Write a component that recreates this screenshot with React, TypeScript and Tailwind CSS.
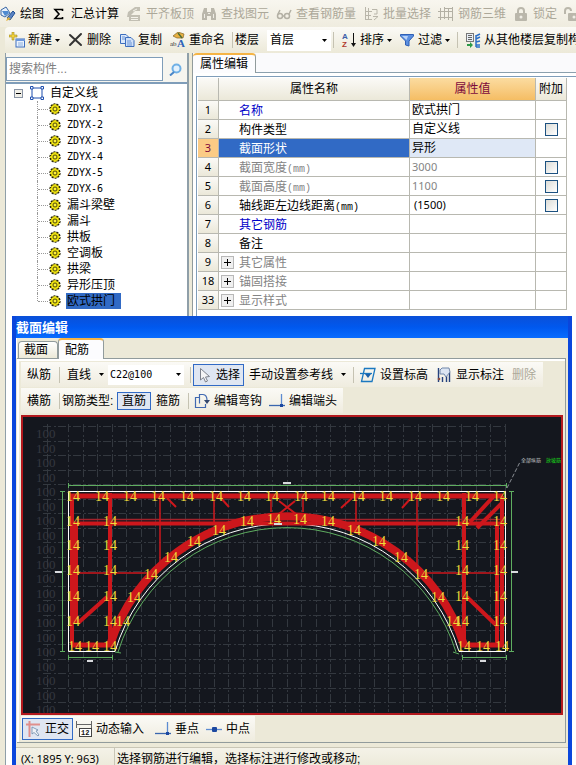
import React from 'react';

type Kids = { children?: React.ReactNode };

function Ico({ children }: Kids) {
  return (
    <svg className="h-4 w-4 shrink-0" viewBox="0 0 16 16" fill="none" aria-hidden="true">
      {children}
    </svg>
  );
}

const Bucket = () => (
  <Ico>
    <path d="M1 4 L6 1 L10 7 L5 11 L1 9Z" fill="#e8f1fb" stroke="#3a67a5" />
    <path d="M2 5 L8 5 L9 7 L5 10Z" fill="#4e8ad0" />
    <path d="M7 12 L13 5 L15 7 L10 14Z" fill="#5b84c4" stroke="#1f4f93" />
    <path d="M6 15 L8 11 L11 13Z" fill="#e2b23c" />
  </Ico>
);
const Sigma = () => (
  <Ico>
    <path d="M11.500 5 V3.500 H4 L8 8 L4 12.500 H11.500 V11" stroke="#000" strokeWidth="1.600" />
  </Ico>
);
const AlignTop = () => (
  <Ico>
    <path d="M2 6 L9 1 H14 V5 H9 L5 9 H14 V15 H3 V11 H1Z" fill="#c2bfb3" />
    <path d="M5 11.500 H12 M5 13.500 H12 M7 5 L11 3" stroke="#f4f2ea" />
  </Ico>
);
const Binoculars = () => (
  <Ico>
    <path d="M3 2 H6 V6 H10 V2 H13 L15 8 V14 H10 V10 H6 V14 H1 V8Z" fill="#bab7ab" />
    <path d="M3.500 8 V12 M12.500 8 V12 M7 7.500 H9" stroke="#f0eee6" />
  </Ico>
);
const Glasses = () => (
  <Ico>
    <circle cx="4" cy="10" r="2.500" stroke="#b3b0a4" strokeWidth="1.500" />
    <circle cx="11" cy="10" r="2.500" stroke="#b3b0a4" strokeWidth="1.500" />
    <path d="M2 8 L4 4 M13 8 L15 4 M6 10 H9" stroke="#b3b0a4" strokeWidth="1.500" />
  </Ico>
);
const Batch = () => (
  <Ico>
    <path d="M2.500 1 V14 M5.500 2 V14 M2 5.500 H9 M2 9.500 H8 M2 13.500 H9 M9 3.500 H14 V8 H11 M10 10.500 H15 L11 14" stroke="#b9b6aa" />
  </Ico>
);
const Rebar3d = () => (
  <Ico>
    <path d="M2.500 2 V14 M6.500 1 V13 M10.500 2 V14 M14.500 1 V15 M0 5.500 H15 M0 11.500 H15 M6 2.500 H14" stroke="#b3b0a4" />
  </Ico>
);
const Lock = () => (
  <Ico>
    <path d="M5 8 V5 a3 3 0 0 1 6 0 V8" stroke="#bab7ab" strokeWidth="2" />
    <rect x="2" y="7" width="12" height="8" rx="1" fill="#bab7ab" />
    <circle cx="8" cy="11" r="1.500" fill="#f0eee6" />
  </Ico>
);
const Unlock = () => (
  <Ico>
    <path d="M1 8 V5 a3 3 0 0 1 6 0" stroke="#bab7ab" strokeWidth="2" />
    <rect x="4" y="7" width="12" height="8" rx="1" fill="#bab7ab" />
    <circle cx="10" cy="11" r="1.500" fill="#f0eee6" />
  </Ico>
);
const NewItem = () => (
  <Ico>
    <path d="M3 0 H5 V3 H8 V5 H5 V8 H3 V5 H0 V3 H3Z" fill="#f1d13c" stroke="#9f8b22" strokeWidth=".6" />
    <rect x="7" y="7" width="8.500" height="8" fill="#eaf2fd" stroke="#3d6ebf" />
    <path d="M7 8 H16" stroke="#6c97dc" strokeWidth="2" />
    <path d="M9 11 H14 M9 13 H14" stroke="#8aaede" />
  </Ico>
);
const Cross = () => (
  <Ico>
    <path d="M2 3 L13 13 M13 2 L2 13" stroke="#333" strokeWidth="2" strokeLinecap="round" />
  </Ico>
);
const Copy = () => (
  <Ico>
    <path d="M1.500 2.500 H7 L9.500 5 V11.500 H1.500Z" fill="#dbe8fa" stroke="#3d6ebf" />
    <path d="M6.500 5.500 H12 L15 8.500 V14.500 H6.500Z" fill="#cfe0f8" stroke="#3d6ebf" />
    <path d="M8 9 H12 M8 11 H13 M8 13 H13 M3 5 H6 M3 7 H6" stroke="#6a93d4" />
  </Ico>
);
const Rename = () => (
  <Ico>
    <path d="M3 4 L8 0 L14 2 L13 6 L7 6Z" fill="#e9b243" stroke="#806326" strokeWidth=".7" />
    <path d="M8 1 L12 6" stroke="#4c6b35" strokeWidth="1.500" />
    <text x="0" y="14" fontSize="7" fontFamily="Liberation Serif, serif" fill="#333">ab</text>
    <text x="7" y="15" fontSize="11" fontWeight="bold" fontFamily="Liberation Serif, serif" fill="#2c62b8">A</text>
  </Ico>
);
const SortAz = () => (
  <Ico>
    <text x="1" y="7" fontSize="8" fontWeight="bold" fontFamily="Liberation Sans, sans-serif" fill="#3d5fa8">A</text>
    <text x="1" y="15" fontSize="8" fontWeight="bold" fontFamily="Liberation Sans, sans-serif" fill="#b0382c">Z</text>
    <path d="M12.500 1 V12" stroke="#111" />
    <path d="M10 11 H15 L12.500 15Z" fill="#111" />
  </Ico>
);
const Funnel = () => (
  <Ico>
    <path d="M1.500 2.500 H14.500 V4 L10 9 V14 L6.500 13 V9 L1.500 4Z" fill="#5b8fe0" stroke="#2f5fb5" />
    <path d="M3 4 H9 L7.500 8Z" fill="#b9d3f7" />
  </Ico>
);
const CopyFloor = () => (
  <Ico>
    <rect x="1.500" y="1.500" width="7" height="8" fill="#e8eef5" stroke="#777" />
    <path d="M3 3.500 H7 M3 5.500 H7 M3 7.500 H7" stroke="#666" />
    <path d="M2 12 H5 V10 L8 13 L5 16 V14 H2Z" fill="#2d9a48" />
    <path d="M11 3 V15 M11 4 L15 2 M11 7 L15 5 M11 10 L15 9 M11 13 L15 13 M11 15 H15" stroke="#2c70c9" strokeWidth="1.500" />
  </Ico>
);
const Pointer = () => (
  <Ico>
    <path d="M3.500 1.500 V13 L6.500 10.500 L8.500 15 L10.500 14 L8.500 10 L12.500 9.500Z" fill="#f4f4f6" stroke="#7c818c" />
  </Ico>
);
const Level = () => (
  <Ico>
    <path d="M4.500 1.500 H15 L12 14.500 H1.500Z" stroke="#1b78c0" strokeWidth="1.300" />
    <path d="M0 6.500 H12" stroke="#1b78c0" strokeWidth="1.300" />
    <path d="M5 7 H11 L8 11Z" fill="#1b5fa8" />
  </Ico>
);
const Dimension = () => (
  <Ico>
    <path d="M2.500 1 V15 M13.500 5 V15 M6.500 10 V15 M10.500 9 V15" stroke="#26427e" strokeWidth="1.400" />
    <path d="M4 3 L6 1 H13 L14 5 L10 10 L8 7 H4Z" fill="#dce5f2" stroke="#7187aa" />
    <circle cx="3" cy="12" r="1.300" fill="#8a4c42" />
  </Ico>
);
const Hook = () => (
  <Ico>
    <path d="M5.500 4.500 H1.500 V14.500 H11.500 V11 M5.500 10.500 V1.500 H9 Q13 2 13 7" stroke="#4169b1" strokeWidth="1.200" />
    <path d="M10 7 H16 L13 11Z" fill="#33476d" />
  </Ico>
);
const Perp = () => (
  <Ico>
    <path d="M0 12.500 H16" stroke="#3a66ae" strokeWidth="1.300" />
    <path d="M12.500 1 V12" stroke="#5c8bd1" strokeWidth="1.300" />
    <rect x="11" y="11" width="3" height="3" fill="#1c48a0" />
  </Ico>
);
const Midpoint = () => (
  <Ico>
    <path d="M0 8.500 H16" stroke="#5c8bd1" strokeWidth="1.300" />
    <rect x="6" y="6" width="5" height="5" rx="1" fill="#1c48a0" />
  </Ico>
);
const Ortho = () => (
  <Ico>
    <path d="M1 3.500 H15 M4.500 0 V16" stroke="#e08f8c" strokeWidth="2" />
    <path d="M7 6 V13 L9 11.500 L13 15 L14 14 L11 10 L13 9Z" fill="#eef2f7" stroke="#6b89a8" strokeWidth=".8" />
  </Ico>
);
const DynInput = () => (
  <Ico>
    <path d="M.5 0 V7 M15.500 0 V7 M1 3.500 H15" stroke="#666" />
    <rect x="3.500" y="7.500" width="12" height="8" fill="#fff" stroke="#444" />
    <text x="5" y="14" fontSize="7" fontFamily="Liberation Mono, monospace" fontWeight="bold" fill="#111">12</text>
  </Ico>
);
const Polygon = () => (
  <Ico>
    <path d="M3 3 H13 V13 H3Z" stroke="#1f4fae" fill="#fff" />
    <path d="M1.500 1.500 H4 V4 H1.500Z M12 1.500 H14.500 V4 H12Z M1.500 12 H4 V14.500 H1.500Z M12 12 H14.500 V14.500 H12Z" fill="#fff" stroke="#1f4fae" />
  </Ico>
);
const Gear = () => (
  <svg className="h-3 w-3 shrink-0" viewBox="0 0 12 12" aria-hidden="true">
    <circle cx="6" cy="6" r="4.900" fill="#d8c800" stroke="#26240a" strokeWidth="1.500" strokeDasharray="2 1" />
    <path d="M6 1 V11 M1 6 H11 M3 3 L9 9 M9 3 L3 9" stroke="#f8ee1c" strokeWidth="1.300" />
    <circle cx="6" cy="6" r="2" fill="#fff23a" stroke="#3a3608" strokeWidth=".9" />
  </svg>
);
const Caret = () => (
  <svg className="h-[3px] w-[5px] shrink-0" viewBox="0 0 5 3" aria-hidden="true">
    <path d="M0 0 H5 L2.500 3Z" fill="#000" />
  </svg>
);
const Sep = () => <span className="h-4 w-px shrink-0 bg-[#c5c2b2]" />;

type ToolProps = { icon?: React.ReactNode; label: string; off?: boolean; caret?: boolean; tight?: boolean };

function Tool({ icon, label, off, caret, tight }: ToolProps) {
  return (
    <button
      type="button"
      disabled={off}
      className={
        off ? 'flex shrink-0 items-center gap-1 text-[#aca899]' : tight ? 'flex shrink-0 items-center gap-[3px]' : 'flex shrink-0 items-center gap-1'
      }
    >
      {icon}
      <span>{label}</span>
      {caret && <Caret />}
    </button>
  );
}

function Combo({ label, options, className }: { label: string; options: string[]; className: string }) {
  return (
    <label className={className}>
      <select aria-label={label} className="min-w-0 flex-1 appearance-none bg-transparent outline-none">
        {options.map((o) => (
          <option key={o}>{o}</option>
        ))}
      </select>
      <Caret />
    </label>
  );
}

const components = ['ZDYX-1', 'ZDYX-2', 'ZDYX-3', 'ZDYX-4', 'ZDYX-5', 'ZDYX-6', '漏斗梁壁', '漏斗', '拱板', '空调板', '拱梁', '异形压顶', '欧式拱门'];

function ComponentTree() {
  return (
    <div className="flex-1 border-t-2 border-[#7f9db9] bg-white pt-px leading-4">
      <div className="flex items-center pl-2">
        <button type="button" aria-label="收起" className="flex h-[9px] w-[9px] items-center justify-center border border-[#8a94a4] bg-[#f0efe8]">
          <span className="h-px w-[5px] bg-black" />
        </button>
        <span className="ml-[6px] flex">
          <Polygon />
        </span>
        <span className="ml-[5px]">自定义线</span>
      </div>
      <ul className="ml-[31px]">
        {components.map((c, i) => (
          <li key={c} className="flex h-4 items-center">
            <span className={i === 12 ? 'h-2 self-start border-l border-dotted border-[#999]' : 'h-4 border-l border-dotted border-[#999]'} />
            <span className="mr-px w-[10px] border-t border-dotted border-[#999]" />
            <Gear />
            <span
              className={
                i === 12
                  ? 'ml-[5px] h-4 w-[55px] bg-[#316ac5] pl-px'
                  : i < 6
                    ? 'ml-[6px] font-[DejaVu_Sans_Mono,monospace] text-[10px]'
                    : 'ml-[6px]'
              }
            >
              {c}
            </span>
          </li>
        ))}
      </ul>
    </div>
  );
}

type Row = { n: number; name: string; value?: string; check?: boolean; tone?: string; group?: boolean };
const rows: Row[] = [
  { n: 1, name: '名称', value: '欧式拱门', tone: 'text-[#0000c8]' },
  { n: 2, name: '构件类型', value: '自定义线', check: true },
  { n: 3, name: '截面形状', value: '异形' },
  { n: 4, name: '截面宽度(mm)', value: '3000', check: true, tone: 'text-[#848484]' },
  { n: 5, name: '截面高度(mm)', value: '1100', check: true, tone: 'text-[#848484]' },
  { n: 6, name: '轴线距左边线距离(mm)', value: '(1500)', check: true },
  { n: 7, name: '其它钢筋', tone: 'text-[#0000c8]' },
  { n: 8, name: '备注' },
  { n: 9, name: '其它属性', tone: 'text-[#848484]', group: true },
  { n: 18, name: '锚固搭接', tone: 'text-[#848484]', group: true },
  { n: 33, name: '显示样式', tone: 'text-[#848484]', group: true },
];

function NameText({ text }: { text: string }) {
  const unit = text.endsWith('(mm)');
  return (
    <>
      {unit ? text.slice(0, -4) : text}
      {unit && <span className="font-[Liberation_Mono,monospace] text-[10px] leading-none">(mm)</span>}
    </>
  );
}

function PropertyTable() {
  return (
    <table className="w-[369px] table-fixed border-separate border-spacing-0 leading-4">
      <colgroup>
        <col className="w-[21px]" />
        <col className="w-[191px]" />
        <col className="w-[126px]" />
        <col className="w-[31px]" />
      </colgroup>
      <thead>
        <tr className="h-[23px]">
          {['', '属性名称', '属性值', '附加'].map((h, i) => (
            <th
              key={i}
              className={
                i === 2
                  ? 'border-r border-b border-[#b8b8b0] bg-linear-to-b from-[#fbdca0] to-[#f5bd63] p-0 font-normal text-[#7c0a3c]'
                  : 'border-r border-b border-[#b8b8b0] bg-linear-to-b from-[#fbfaf7] to-[#ebe8d9] p-0 font-normal whitespace-nowrap'
              }
            >
              {h}
            </th>
          ))}
        </tr>
      </thead>
      <tbody>
        {rows.map((r) => {
          const sel = r.n === 3;
          return (
            <tr key={r.n} className="h-[19px]">
              <th
                scope="row"
                className={
                  sel
                    ? 'border-r border-b border-[#b8b8b0] bg-[#fbcb85] p-0 font-[Noto_Sans,sans-serif] text-[11px] font-normal text-[#7c0a3c]'
                    : 'border-r border-b border-[#b8b8b0] bg-linear-to-b from-[#fbfaf7] to-[#ebe8d9] p-0 font-[Noto_Sans,sans-serif] text-[11px] font-normal'
                }
              >
                {r.n}
              </th>
              <td className={sel ? 'border-r border-b border-[#b8b8b0] bg-[#316ac5] p-0 text-white' : 'border-r border-b border-[#b8b8b0] p-0'}>
                <div className="flex items-center pt-px">
                  <span className="flex w-5 pl-[2px]">
                    {r.group && (
                      <button type="button" aria-label="展开" className="flex h-[13px] w-[13px] items-center justify-center border border-[#b8b8b8] bg-[#f0f0f0]">
                        <svg className="h-[7px] w-[7px]" viewBox="0 0 7 7">
                          <path d="M0 3.500 H7 M3.500 0 V7" stroke="#000" />
                        </svg>
                      </button>
                    )}
                  </span>
                  <span className={r.tone}>
                    <NameText text={r.name} />
                  </span>
                </div>
              </td>
              <td className={sel ? 'border-r border-b border-[#b8b8b0] bg-[#dfe8f6] p-0 pl-[2px]' : 'border-r border-b border-[#b8b8b0] p-0 pl-[2px]'}>
                <span className={r.n === 4 || r.n === 5 ? 'font-[Noto_Sans,sans-serif] text-[11px] text-[#848484]' : r.n === 6 ? 'pl-[2px] font-[Noto_Sans,sans-serif] text-[11px]' : ''}>{r.value}</span>
              </td>
              <td className="border-r border-b border-[#b8b8b0] p-0">
                {r.check && (
                  <input
                    type="checkbox"
                    aria-label={r.name}
                    className="mx-auto block h-[13px] w-[13px] appearance-none border border-[#1c5180] bg-linear-to-br from-[#dcdcd7] to-white"
                  />
                )}
              </td>
            </tr>
          );
        })}
      </tbody>
    </table>
  );
}

const step = 437 / 30;
const bars: [number, number][] = [
  ...[73, 102, 130, 158, 187, 216, 244, 272, 301, 328, 358, 386, 415, 443, 472, 500].map((x): [number, number] => [x, 497]),
  ...[522, 546, 571, 597, 622].flatMap((y) => [73, 110, 462, 500].map((x): [number, number] => [x, y])),
  [75, 647], [92, 647], [110, 647], [464, 647], [483, 647], [502, 647],
  [123, 622], [134, 598], [151, 575], [171, 558], [194, 542], [219, 531], [247, 522], [274, 520],
  [300, 520], [328, 522], [354, 531], [379, 542], [401, 558], [421, 575], [438, 598], [453, 622],
];

function SectionDrawing() {
  return (
    <svg className="block w-full" viewBox="23 417 538 296" role="img" aria-label="截面配筋图" fill="none">
      <g stroke="#33383f" strokeDasharray="8 3 2 2">
        {Array.from({ length: 31 }, (_, i) => (
          <path key={i} d={`M${Math.round(68 + i * step) + 0.5} 424 V712`} />
        ))}
        {Array.from({ length: 20 }, (_, i) => (
          <path key={i} d={`M43 ${Math.round(426 + i * 14.54) + 0.5} H508`} />
        ))}
        <path d="M47.500 424 V712" />
      </g>
      <g fill="#343840" fontFamily="Liberation Serif, serif" fontSize="13">
        {Array.from({ length: 20 }, (_, i) => (
          <text key={i} x="36" y={438 + i * 14.54}>
            100
          </text>
        ))}
      </g>
      <g stroke="#5fae60">
        <path d="M68 485.500 H507 M62.500 492 V652 M511.500 492 V652 M68 657.500 H113 M462 657.500 H507" />
        <path d="M68.500 483 V488 M506.500 483 V488 M60 491.500 H65 M60 651.500 H65 M509 491.500 H514 M509 651.500 H514 M68.500 655 V660 M112.500 655 V660 M462.500 655 V660 M506.500 655 V660" />
        <path d="M118 652 A177 177 0 0 1 456 652 M115 652 L121 653 M453 652 L459 654" />
      </g>
      <path d="M68.500 491.500 H505.500 V651.500 H459 A179.600 179.600 0 0 0 115 651.500 H68.500Z" stroke="#fff" />
      <g stroke="#cd171c">
        <path d="M70 496 H503 M71 645 H113 M461 645 H504" strokeWidth="5" />
        <path d="M72 523.500 H502 M110 493 V645 M464 493 V645" strokeWidth="4" />
        <path d="M72 496 V645 M502 496 V645" strokeWidth="4" />
        <path d="M74 523 V623" strokeWidth="8" />
        <path d="M497 523 V645" strokeWidth="4" />
        <path d="M76 519.500 H500" strokeWidth="1.500" stroke="#a3222b" />
        <path d="M110 645 A186 186 0 0 1 464 645" strokeWidth="8" />
        <path d="M160 497 V562 M214 497 V524 M271 497 V512 M303 497 V512 M356 497 V524 M417 497 V573 M77 573 H150 M424 573 H496" strokeWidth="1.500" />
        <path d="M167 498 L176 507 M220 497 L229 507 M352 498 L341 508 M411 498 L402 508 M279 501 L296 514 M295 501 L279 514" strokeWidth="2" />
        <path d="M78 623 L107 597 M467 597 L496 625 M493 497 L470 522 M502 503 L477 528" strokeWidth="4" />
      </g>
      <g fill="#efdc3a" fontFamily="Liberation Serif, serif" fontSize="14" textAnchor="middle">
        {bars.map(([x, y], i) => (
          <text key={i} x={x} y={y + 4}>
            14
          </text>
        ))}
      </g>
      <path d="M283 483 H291 M55 572 H62 M511 572 H518 M87 661 H93 M480 661 H486 M274 524 H282" stroke="#d8dadd" strokeWidth="2" />
      <path d="M507 488 L520 462" stroke="#8a8e94" strokeDasharray="4 2" />
      <text x="521" y="462" fontSize="5" fill="#c4c6ca">全部纵筋</text>
      <text x="546" y="462" fontSize="5" fill="#18e018">放坡筋</text>
    </svg>
  );
}

function SectionDialog() {
  return (
    <section
      aria-label="截面编辑"
      className="absolute top-[316px] right-1 bottom-0 left-3 flex flex-col overflow-hidden border-x-4 border-[#0a46dc] bg-[#ece9d8]"
    >
      <h2 className="-mx-1 h-[22px] shrink-0 bg-linear-to-b from-[#0a50d8] via-[#0058ee] to-[#0a6cff] pt-[2px] pl-1 text-[13px] leading-5 font-bold text-white">截面编辑</h2>
      <div role="tablist" className="flex h-5 shrink-0 items-end border-l border-white pl-[1px]">
        <button type="button" role="tab" aria-selected="false" className="h-[17px] w-10 rounded-t-sm border border-b-0 border-[#919b9c] bg-linear-to-b from-white to-[#ece9d8] pr-1 leading-4">
          截面
        </button>
        <button type="button" role="tab" aria-selected="true" className="relative -mb-px h-[21px] w-[46px] rounded-t-sm border border-t-2 border-b-0 border-[#919b9c] border-t-[#f5b445] bg-[#fcfcfe] pr-2 leading-4">
          配筋
        </button>
      </div>
      <div className="mr-[2px] ml-px flex flex-col border-t border-r border-b border-[#919b9c]">
        <div className="flex flex-col gap-px border-t-2 border-l-2 border-white px-[2px] pt-px">
          <div className="flex h-[25px] w-[522px] items-center bg-linear-to-b from-[#fbfaf6] to-[#efecdf] pl-[6px]">
            <Tool label="纵筋" />
            <span className="ml-2 flex">
              <Sep />
            </span>
            <button type="button" className="ml-[7px] flex items-center gap-2">
              直线
              <Caret />
            </button>
            <Combo
              label="钢筋信息"
              options={['C22@100']}
              className="ml-1 flex h-5 w-[76px] items-center bg-white pr-[3px] pl-[2px] font-[DejaVu_Sans_Mono,monospace] text-[10px]"
            />
            <span className="ml-[6px] flex">
              <Sep />
            </span>
            <button type="button" className="ml-[2px] flex h-[22px] w-[51px] items-center gap-[3px] border border-[#316ac5] bg-[#dfe6f2] pl-[3px] whitespace-nowrap">
              <Pointer />
              选择
            </button>
            <button type="button" className="ml-[5px] flex items-center gap-2">
              手动设置参考线
              <Caret />
            </button>
            <span className="mr-[6px] ml-[7px] flex">
              <Sep />
            </span>
            <span className="flex gap-2">
              <Tool icon={<Level />} label="设置标高" />
              <Tool icon={<Dimension />} label="显示标注" />
              <Tool label="删除" off />
            </span>
          </div>
          <div className="flex h-[25px] w-[322px] items-center bg-linear-to-b from-[#fbfaf6] to-[#efecdf] pl-[6px]">
            <Tool label="横筋" />
            <span className="mr-[2px] ml-2 flex">
              <Sep />
            </span>
            <span className="w-[55px]">钢筋类型:</span>
            <button type="button" className="h-[18px] w-[34px] border border-[#316ac5] bg-[#dfe6f2] leading-4">
              直筋
            </button>
            <span className="mr-2 ml-[5px] flex">
              <Tool label="箍筋" />
            </span>
            <Sep />
            <span className="ml-[5px] flex gap-[7px]">
              <Tool icon={<Hook />} label="编辑弯钩" />
              <Tool icon={<Perp />} label="编辑端头" />
            </span>
          </div>
          <div className="mt-px border-2 border-[#b3191e] bg-[#14171e]">
            <SectionDrawing />
          </div>
          <div className="mb-px flex h-[25px] w-[234px] items-center bg-linear-to-b from-[#fbfaf6] to-[#efecdf] pl-px">
            <button type="button" className="mr-[3px] flex h-[22px] w-[51px] items-center gap-1 border border-[#316ac5] bg-[#dfe6f2] pl-[2px] whitespace-nowrap">
              <Ortho />
              正交
            </button>
            <Tool icon={<DynInput />} label="动态输入" />
            <span className="ml-[11px] flex gap-[7px]">
              <Tool icon={<Perp />} label="垂点" />
              <Tool icon={<Midpoint />} label="中点" />
            </span>
          </div>
        </div>
      </div>
      <footer className="mt-1 flex h-[22px] shrink-0 border-t border-[#c9c6b6] bg-linear-to-b from-[#f4f2e8] to-[#ece9d8] leading-[22px] whitespace-nowrap">
        <span className="w-[99px] border-r border-[#c9c6b6] pl-[5px] font-[Noto_Sans,sans-serif] text-[11px]">(X: 1895 Y: 963)</span>
        <span className="ml-[2px]">选择钢筋进行编辑，选择标注进行修改或移动;</span>
      </footer>
    </section>
  );
}

export default function App() {
  return (
    <main className="relative flex h-screen flex-col overflow-hidden bg-[#ece9d8] font-[Liberation_Sans,Noto_Sans_CJK_SC,sans-serif] text-[12px] leading-4 whitespace-nowrap text-black">
      <nav className="flex h-[27px] shrink-0 items-center gap-[7px] bg-linear-to-b from-[#f8f6ef] to-[#efecdf]">
        <Tool icon={<Bucket />} label="绘图" />
        <Tool icon={<Sigma />} label="汇总计算" />
        <Tool icon={<AlignTop />} label="平齐板顶" off />
        <Tool icon={<Binoculars />} label="查找图元" off />
        <Tool icon={<Glasses />} label="查看钢筋量" off />
        <Tool icon={<Batch />} label="批量选择" off />
        <Tool icon={<Rebar3d />} label="钢筋三维" off />
        <Tool icon={<Lock />} label="锁定" off />
        <Unlock />
      </nav>
      <nav className="ml-[5px] flex h-[26px] shrink-0 items-center rounded-l bg-linear-to-b from-[#fbfaf6] to-[#ece9d8] pl-1">
        <div className="mr-[7px] flex items-center gap-2">
          <Tool icon={<NewItem />} label="新建" caret tight />
          <Tool icon={<Cross />} label="删除" tight />
          <Tool icon={<Copy />} label="复制" tight />
          <Tool icon={<Rename />} label="重命名" tight />
        </div>
        <Sep />
        <span className="ml-[2px]">楼层</span>
        <Combo label="楼层" options={['首层']} className="ml-2 flex h-[21px] w-[64px] shrink-0 items-center bg-white pr-1 pl-[3px]" />
        <div className="ml-[2px] flex items-center gap-[7px]">
          <Sep />
          <Tool icon={<SortAz />} label="排序" caret tight />
          <Tool icon={<Funnel />} label="过滤" caret tight />
          <Sep />
          <Tool icon={<CopyFloor />} label="从其他楼层复制构件" tight />
        </div>
      </nav>
      <div className="flex min-h-0 flex-1">
        <aside className="ml-[5px] flex w-[184px] shrink-0 flex-col border-r-2 border-l border-[#8f9fa8] bg-[#f6f5ef] pt-1">
          <form className="flex h-[25px]" role="search">
            <input type="search" aria-label="搜索构件" placeholder="搜索构件..." className="mb-px w-[157px] appearance-none border border-[#7f9db9] bg-white pl-[2px] outline-none placeholder:text-[#808080]" />
            <button type="button" aria-label="搜索" className="flex flex-1 items-center justify-center">
              <svg className="h-[13px] w-[13px]" viewBox="0 0 13 13" fill="none">
                <circle cx="7.500" cy="5.500" r="4" fill="#e3f1fd" stroke="#6fb0e6" strokeWidth="2" />
                <path d="M5 9 L1 12.500" stroke="#4a86c8" strokeWidth="2" />
              </svg>
            </button>
          </form>
          <ComponentTree />
        </aside>
        <section className="ml-[3px] flex min-w-0 flex-1 flex-col border-l border-[#919b9c] bg-white">
          <div role="tablist" className="flex h-5 border-b border-[#8ba0ad] bg-[#fafafc]">
            <button type="button" role="tab" aria-selected="true" className="h-5 w-[63px] rounded-t-sm border-t-2 border-r border-t-[#f5b445] border-r-[#919b9c] bg-[#fcfcfe]">
              属性编辑
            </button>
          </div>
          <div className="mt-[3px] ml-[3px] flex-1 border-t border-l border-[#7f9db9] pt-px pl-px">
            <PropertyTable />
          </div>
        </section>
      </div>
      <SectionDialog />
    </main>
  );
}
